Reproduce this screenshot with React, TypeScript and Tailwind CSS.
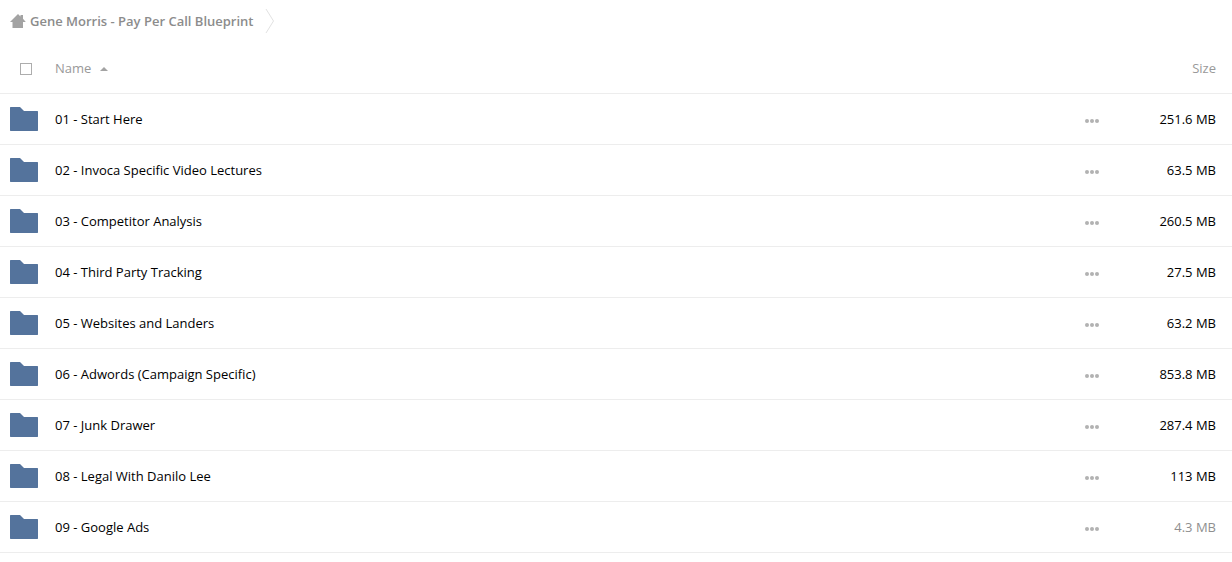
type Folder = { name: string; size: string; small?: boolean };

const folders: Folder[] = [
  { name: "01 - Start Here", size: "251.6 MB" },
  { name: "02 - Invoca Specific Video Lectures", size: "63.5 MB" },
  { name: "03 - Competitor Analysis", size: "260.5 MB" },
  { name: "04 - Third Party Tracking", size: "27.5 MB" },
  { name: "05 - Websites and Landers", size: "63.2 MB" },
  { name: "06 - Adwords (Campaign Specific)", size: "853.8 MB" },
  { name: "07 - Junk Drawer", size: "287.4 MB" },
  { name: "08 - Legal With Danilo Lee", size: "113 MB" },
  { name: "09 - Google Ads", size: "4.3 MB", small: true },
];

function HomeIcon() {
  return (
    <svg width="16" height="14" viewBox="0 0 16 14" fill="#a3a3a3" aria-hidden="true">
      <path d="M8 0 10.5 2.4V1H13v3.8L15.8 8H13v6H2.5V8H0Z" />
    </svg>
  );
}

function CrumbArrow() {
  return (
    <svg width="10" height="26" viewBox="0 0 10 26" fill="none" stroke="#e2e2e2" aria-hidden="true">
      <path d="M1 1 8.5 13 1 25" />
    </svg>
  );
}

function FolderIcon() {
  return (
    <svg className="block" width="28" height="24" viewBox="0 0 28 24" fill="#54739c" aria-hidden="true">
      <path d="M.5 0H10L14 4H27.5L28 4.5V23.5L27.5 24H.5L0 23.5V.5Z" />
    </svg>
  );
}

function DotsIcon() {
  return (
    <svg width="14" height="4" viewBox="0 0 14 4" fill="#b2b2b2" aria-hidden="true">
      <circle cx="2" cy="2" r="2" />
      <circle cx="7" cy="2" r="2" />
      <circle cx="12" cy="2" r="2" />
    </svg>
  );
}

export default function App() {
  return (
    <main className="min-h-screen bg-white font-['Open_Sans',sans-serif] text-[13px] leading-5 text-black">
      <nav aria-label="Breadcrumb" className="flex h-[42px] items-center pl-[10px]">
        <a href="#" className="flex items-center gap-1 font-semibold text-[#8c8c8c]">
          <HomeIcon />
          <span>Gene Morris - Pay Per Call Blueprint</span>
        </a>
        <span className="ml-[11px]">
          <CrumbArrow />
        </span>
      </nav>
      <table className="w-full table-fixed border-collapse">
        <thead>
          <tr className="h-[51px] border-b border-[#ededed] text-[#999999]">
            <th scope="col" className="w-[55px] p-0 pt-1 pl-5 text-left">
              <input
                type="checkbox"
                aria-label="Select all"
                className="block size-3 appearance-none border border-[#adadad] bg-white checked:bg-[#adadad]"
              />
            </th>
            <th scope="col" className="p-0 pt-0.5 text-left font-normal">
              <button type="button" className="flex items-center gap-[9px]">
                Name
                <svg className="mt-0.5" width="8" height="4" viewBox="0 0 8 4" fill="#a3a3a3" aria-hidden="true">
                  <path d="M0 4 4 0 8 4Z" />
                </svg>
              </button>
            </th>
            <td className="w-[50px] p-0" />
            <th scope="col" className="w-[115px] p-0 pt-0.5 pr-4 text-right font-normal">
              <button type="button">Size</button>
            </th>
          </tr>
        </thead>
        <tbody>
          {folders.map((folder) => (
            <tr key={folder.name} className="h-[51px] border-b border-[#ededed]">
              <td className="p-0 pl-[10px]">
                <FolderIcon />
              </td>
              <td className="p-0">
                <a href="#">{folder.name}</a>
              </td>
              <td className="p-0">
                <button type="button" aria-label={`Actions for ${folder.name}`} className="flex w-full items-center justify-center pt-1">
                  <DotsIcon />
                </button>
              </td>
              <td className={folder.small ? "p-0 pr-4 text-right text-[#8f8f8f]" : "p-0 pr-4 text-right"}>
                {folder.size}
              </td>
            </tr>
          ))}
        </tbody>
      </table>
    </main>
  );
}
